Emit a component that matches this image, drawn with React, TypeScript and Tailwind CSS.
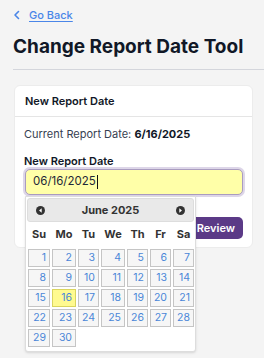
import React from 'react';

const cols = ['Su', 'Mo', 'Tu', 'We', 'Th', 'Fr', 'Sa'];

// June 2025 starts on a Sunday
const weeks: (number | null)[][] = [
    [1, 2, 3, 4, 5, 6, 7],
    [8, 9, 10, 11, 12, 13, 14],
    [15, 16, 17, 18, 19, 20, 21],
    [22, 23, 24, 25, 26, 27, 28],
    [29, 30, null, null, null, null, null],
];

function CircleArrow({ dir }: { dir: 'left' | 'right' }) {
    return (
        <svg width="9" height="9" viewBox="0 0 10 10">
            <circle cx="5" cy="5" r="5" fill="#333" />
            {dir === 'left'
                ? <polygon points="6.3,2.6 3.4,5 6.3,7.4" fill="#fff" />
                : <polygon points="3.7,2.6 6.6,5 3.7,7.4" fill="#fff" />}
        </svg>
    );
}

function DatePicker() {
    return (
        <div className="absolute left-0 top-[27px] w-[171px] bg-white border border-[#dddddd] rounded-b-[3px] px-[1px] pt-[1px] pb-[4px] shadow-sm z-10">
            <div className="h-[24px] bg-[#e9e9e9] border border-[#dddddd] rounded-[3px] flex items-center justify-between px-[8px]">
                <CircleArrow dir="left" />
                <span className="text-[11px] font-bold text-[#333]">June 2025</span>
                <CircleArrow dir="right" />
            </div>
            <div className="grid grid-cols-[22px_24px_21px_24px_21px_21px_21px] gap-x-[2px] gap-y-[2px] pl-[1px]">
                {cols.map((c) => (
                    <div key={c} className="h-[25px] flex items-center justify-center text-[11px] font-bold text-[#333]">
                        {c}
                    </div>
                ))}
                {weeks.flat().map((d, i) => (
                    d === null ? <div key={i} /> : (
                        <div key={i}
                             className={`h-[18px] border flex items-center justify-end pr-[3px] text-[10.5px] text-[#4a86d8] ${d === 16 ? 'bg-[#fffa90] border-[#dad55e]' : 'bg-[#f6f6f6] border-[#c5c5c5]'}`}>
                            {d}
                        </div>
                    )
                ))}
            </div>
        </div>
    );
}

export default function App() {
    return (
        <div className="min-h-screen w-[264px] bg-[#f4f4f4] font-['Inter',sans-serif] text-[#1f2937] overflow-hidden">
            <div className="pt-[7px] pl-[13px] flex items-center gap-[8px] h-[23px]">
                <svg width="8" height="10" viewBox="0 0 8 10" fill="none">
                    <path d="M5.5 1.5 L2 5 L5.5 8.5" stroke="#4a86e8" strokeWidth="1.6" strokeLinecap="round" strokeLinejoin="round" />
                </svg>
                <a href="#" className="text-[11px] leading-[16px] font-medium text-[#4a86e8] underline underline-offset-2">Go Back</a>
            </div>
            <h1 className="mt-[12px] pl-[13px] text-[19px] leading-[24px] font-bold text-[#111827] whitespace-nowrap">
                Change Report Date Tool
            </h1>
            <div className="mt-[10px] ml-[13px] border-t border-[#d4d6dc]" />

            <div className="mt-[15px] ml-[14px] mr-[11px] bg-white rounded-[6px] border border-[#ececec]">
                <div className="h-[31px] px-[10px] flex items-center border-b border-[#e5e5e5] text-[11px] font-semibold text-[#111827]">
                    New Report Date
                </div>
                <div className="px-[9px] pt-[9px] pb-[8px]">
                    <p className="text-[11px] leading-[16px] text-[#374151]">
                        Current Report Date: <span className="font-bold text-[#111827]">6/16/2025</span>
                    </p>
                    <p className="mt-[12px] text-[11px] leading-[14px] font-semibold text-[#111827]">New Report Date</p>
                    <div className="relative mt-[1px] ml-[1px]">
                        <div className="h-[26px] w-[218px] rounded-[5px] bg-[#ffffa8] border border-[#a99cc0] ring-2 ring-[#ddd6e8] flex items-center pl-[7px] text-[11.5px] text-[#1f2937]">
                            06/16/2025<span className="w-px h-[14px] bg-[#111] ml-[1px]" />
                        </div>
                        <DatePicker />
                    </div>
                    <div className="mt-[22px] flex justify-end">
                        <button className="h-[22px] px-[8px] rounded-[5px] bg-[#5b3a87] text-white text-[11px] font-semibold">
                            Go to Review
                        </button>
                    </div>
                </div>
            </div>
        </div>
    );
}
